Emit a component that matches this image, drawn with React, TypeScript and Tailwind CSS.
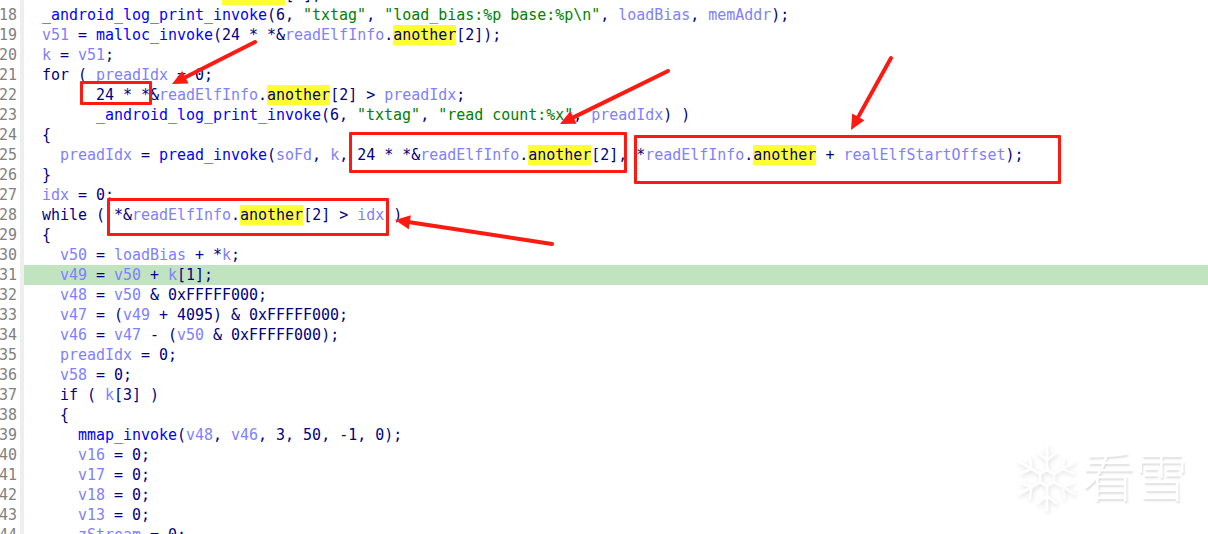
import React from 'react';

type Tok = [string, string];

const K = 'text-[#000080]';
const V = 'text-[#8080ff]';
const F = 'text-[#0000ff]';
const S = 'text-[#008000]';
const H = 'inline-block h-5 bg-[#ffff33] text-[#000080]';

const elfCount: Tok[] = [[K, '*&'], [V, 'readElfInfo'], [K, '.'], [H, 'another'], [K, '[2]']];

const lines: Tok[][] = [
  [[K, '  '], [V, 'v53'], [K, ' = '], ...elfCount, [K, ';']],
  [[F, '  _android_log_print_invoke'], [K, '(6, '], [S, '"txtag"'], [K, ', '], [S, '"load_bias:%p base:%p\\n"'], [K, ', '], [V, 'loadBias'], [K, ', '], [V, 'memAddr'], [K, ');']],
  [[V, '  v51'], [K, ' = '], [F, 'malloc_invoke'], [K, '(24 * '], ...elfCount, [K, ');']],
  [[V, '  k'], [K, ' = '], [V, 'v51'], [K, ';']],
  [[K, '  for ( '], [V, 'preadIdx'], [K, ' = 0;']],
  [[K, '        24 * '], ...elfCount, [K, ' > '], [V, 'preadIdx'], [K, ';']],
  [[F, '        _android_log_print_invoke'], [K, '(6, '], [S, '"txtag"'], [K, ', '], [S, '"read count:%x"'], [K, ', '], [V, 'preadIdx'], [K, ') )']],
  [[K, '  {']],
  [[V, '    preadIdx'], [K, ' = '], [F, 'pread_invoke'], [K, '('], [V, 'soFd'], [K, ', '], [V, 'k'], [K, ', 24 * '], ...elfCount, [K, ', *'], [V, 'readElfInfo'], [K, '.'], [H, 'another'], [K, ' + '], [V, 'realElfStartOffset'], [K, ');']],
  [[K, '  }']],
  [[V, '  idx'], [K, ' = 0;']],
  [[K, '  while ( '], ...elfCount, [K, ' > '], [V, 'idx'], [K, ' )']],
  [[K, '  {']],
  [[V, '    v50'], [K, ' = '], [V, 'loadBias'], [K, ' + *'], [V, 'k'], [K, ';']],
  [[V, '    v49'], [K, ' = '], [V, 'v50'], [K, ' + '], [V, 'k'], [K, '[1];']],
  [[V, '    v48'], [K, ' = '], [V, 'v50'], [K, ' & 0xFFFFF000;']],
  [[V, '    v47'], [K, ' = ('], [V, 'v49'], [K, ' + 4095) & 0xFFFFF000;']],
  [[V, '    v46'], [K, ' = '], [V, 'v47'], [K, ' - ('], [V, 'v50'], [K, ' & 0xFFFFF000);']],
  [[V, '    preadIdx'], [K, ' = 0;']],
  [[V, '    v58'], [K, ' = 0;']],
  [[K, '    if ( '], [V, 'k'], [K, '[3] )']],
  [[K, '    {']],
  [[F, '      mmap_invoke'], [K, '('], [V, 'v48'], [K, ', '], [V, 'v46'], [K, ', 3, 50, -1, 0);']],
  [[V, '      v16'], [K, ' = 0;']],
  [[V, '      v17'], [K, ' = 0;']],
  [[V, '      v18'], [K, ' = 0;']],
  [[V, '      v13'], [K, ' = 0;']],
  [[V, '      zStream'], [K, ' = 0;']],
];

const boxes = [
  'left-[80px] top-[81px] w-[72px] h-[24px]',
  'left-[349px] top-[132px] w-[278px] h-[41px]',
  'left-[634px] top-[135px] w-[427px] h-[49px]',
  'left-[107px] top-[198px] w-[282px] h-[38px]',
];

// tail x, tail y, tip x, tip y
const arrows = [
  [255, 42, 172, 84],
  [668, 71, 560, 124],
  [891, 58, 851, 130],
  [552, 244, 395, 220],
];

function Arrow({ a }: { a: number[] }) {
  const [x1, y1, x2, y2] = a;
  const len = Math.hypot(x2 - x1, y2 - y1);
  const ux = (x2 - x1) / len;
  const uy = (y2 - y1) / len;
  const bx = x2 - ux * 15;
  const by = y2 - uy * 15;
  const head = `${x2},${y2} ${bx - uy * 7},${by + ux * 7} ${bx + uy * 7},${by - ux * 7}`;
  return (
    <g>
      <line x1={x1} y1={y1} x2={bx} y2={by} stroke="#fd1a12" strokeWidth="4" strokeLinecap="round" />
      <polygon points={head} fill="#fd1a12" />
    </g>
  );
}

function Snowflake() {
  const arms = [0, 60, 120, 180, 240, 300];
  return (
    <svg width="62" height="68" viewBox="-31 -34 62 68" className="drop-shadow-[1px_2px_2px_rgba(0,0,0,0.13)]">
      {arms.map((r) => (
        <g key={r} transform={`rotate(${r})`} stroke="#ffffff" strokeWidth="2.6" fill="none" strokeLinecap="round" opacity={r === 60 || r === 120 ? 0.75 : 1}>
          <line x1="0" y1="-9" x2="0" y2="-32" />
          <line x1="0" y1="-18" x2="-9" y2="-25" />
          <line x1="0" y1="-18" x2="9" y2="-25" />
          <line x1="0" y1="-8" x2="7" y2="-4" />
        </g>
      ))}
    </svg>
  );
}

export default function App() {
  return (
    <div className="relative w-[1208px] h-[534px] overflow-hidden bg-white font-['DejaVu_Sans_Mono','Liberation_Mono',monospace] text-[14.96px]">
      <div className="-mt-[15px] flex flex-col">
        {lines.map((line, i) => (
          <div key={i} className="flex h-5 leading-5">
            <div className="w-[17px] mr-[3px] overflow-hidden flex justify-end text-[#808080]">
              <span>{17 + i}</span>
            </div>
            <div className="w-1 bg-[#eeeeee]" />
            <div className={`flex-1 whitespace-pre ${17 + i === 31 ? 'bg-[#c0e4c0]' : ''}`}>
              {line.map((t, j) => (
                <span key={j} className={t[0]}>{t[1]}</span>
              ))}
            </div>
          </div>
        ))}
      </div>

      {boxes.map((b) => (
        <div key={b} className={`absolute rounded-[1px] border-[3px] border-[#fd1a12] ${b}`} />
      ))}

      <svg className="absolute inset-0" width="1208" height="534" viewBox="0 0 1208 534">
        {arrows.map((a, i) => (
          <Arrow key={i} a={a} />
        ))}
      </svg>

      <div className="absolute left-[1016px] top-[444px] flex items-center gap-1">
        <Snowflake />
        <span className="pb-[8px] font-['Noto_Sans_CJK_SC',sans-serif] font-light text-[53px] leading-none text-white [text-shadow:1px_2px_2px_rgba(0,0,0,0.14)]">看雪</span>
      </div>
    </div>
  );
}
